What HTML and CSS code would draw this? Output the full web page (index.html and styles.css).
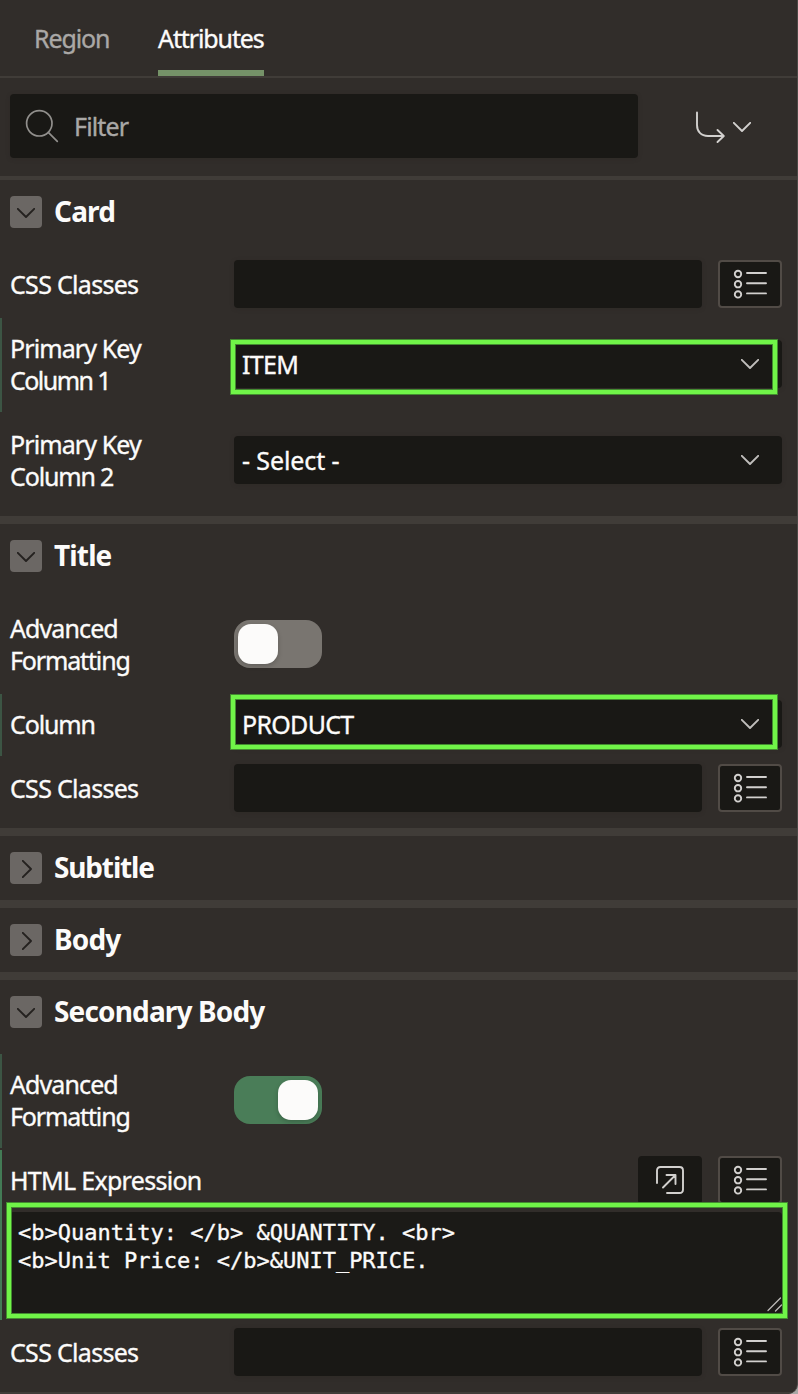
FILE: index.html
```
<!DOCTYPE html>
<html lang="en">
<head>
<meta charset="utf-8">
<title>Attributes</title>
<link rel="stylesheet" href="styles.css">
</head>
<body>
<svg class="defs" width="0" height="0">
  <defs>
    <symbol id="down" viewBox="0 0 18 10"><path d="M0.8 0.8 9 9 17.2 0.8"/></symbol>
    <symbol id="right" viewBox="0 0 10 18"><path d="M0.8 0.8 9 9 0.8 17.2"/></symbol>
    <symbol id="list" viewBox="0 0 34 30">
      <circle cx="5" cy="5" r="3.2"/><circle cx="5" cy="15.2" r="3.2"/><circle cx="5" cy="25.4" r="3.2"/>
      <path d="M14 4h19M14 14.2h19M14 24.4h19"/>
    </symbol>
  </defs>
</svg>
<main class="panel">
  <nav class="tabs">
    <a class="tab tab-region">Region</a>
    <a class="tab tab-active">Attributes</a>
  </nav>
  <div class="toolbar">
    <div class="filter">
      <svg class="search" width="34" height="34" viewBox="0 0 34 34"><circle cx="14.3" cy="14.3" r="12.7"/><path d="m23.3 23.3 9 9"/></svg>
      <span class="filter-text">Filter</span>
    </div>
    <div class="goto">
      <svg class="icon" width="30" height="32" viewBox="0 0 30 32"><path d="M1 2.500v12.500C1 21.500 5 26 12 26h15M21.500 20l6.300 6-6.300 6"/></svg>
      <svg class="icon goto-arrow" width="18" height="10"><use href="#down"/></svg>
    </div>
  </div>

  <section class="group first">
    <h2 class="head"><span class="toggle"><svg width="18" height="10"><use href="#down"/></svg></span><span class="head-text">Card</span></h2>
    <div class="rows">
      <div class="row">
        <label class="label">CSS Classes</label><div class="field"></div>
        <button class="list-btn"><svg class="icon" width="34" height="30"><use href="#list"/></svg></button>
      </div>
      <div class="row tall changed">
        <label class="label"><span class="snug">Primary Key</span><br><span class="tightest">Column 1</span></label>
        <div class="field select"><span class="value item">ITEM</span><svg class="caret" width="18" height="10"><use href="#down"/></svg><i class="mark mark-low"></i></div>
      </div>
      <div class="row tall">
        <label class="label"><span class="snug">Primary Key</span><br><span class="tight">Column 2</span></label>
        <div class="field select"><span class="value loose">- Select -</span><svg class="caret" width="18" height="10"><use href="#down"/></svg></div>
      </div>
    </div>
  </section>

  <section class="group">
    <h2 class="head"><span class="toggle"><svg width="18" height="10"><use href="#down"/></svg></span><span class="head-text">Title</span></h2>
    <div class="rows">
      <div class="row tall">
        <label class="label"><span class="snug">Advanced</span><br><span class="tight">Formatting</span></label><span class="switch"><i class="knob"></i></span>
      </div>
      <div class="row changed">
        <label class="label tight">Column</label>
        <div class="field select"><span class="value product">PRODUCT</span><svg class="caret" width="18" height="10"><use href="#down"/></svg><i class="mark"></i></div>
      </div>
      <div class="row">
        <label class="label">CSS Classes</label><div class="field"></div>
        <button class="list-btn"><svg class="icon" width="34" height="30"><use href="#list"/></svg></button>
      </div>
    </div>
  </section>

  <section class="group">
    <h2 class="head"><span class="toggle"><svg class="closed" width="10" height="18"><use href="#right"/></svg></span><span class="head-text tight">Subtitle</span></h2>
  </section>
  <section class="group">
    <h2 class="head"><span class="toggle"><svg class="closed" width="10" height="18"><use href="#right"/></svg></span><span class="head-text">Body</span></h2>
  </section>

  <section class="group">
    <h2 class="head"><span class="toggle"><svg width="18" height="10"><use href="#down"/></svg></span><span class="head-text">Secondary Body</span></h2>
    <div class="rows">
      <div class="row tall changed">
        <label class="label"><span class="snug">Advanced</span><br><span class="tight">Formatting</span></label><span class="switch on"><i class="knob"></i></span>
      </div>
      <div class="code-row changed current">
        <div class="code-head">
          <label class="label wide">HTML Expression</label>
          <button class="open-btn"><svg class="icon" width="30" height="30" viewBox="0 0 30 30"><path d="M2 18V5.500Q2 2 5.500 2h19Q28 2 28 5.500v19q0 3.500-3.500 3.500H12M8 22.500 20.500 10M11.500 10h9v9"/></svg></button>
          <button class="list-btn"><svg class="icon" width="34" height="30"><use href="#list"/></svg></button>
        </div>
        <div class="code"><pre class="code-text">&lt;b&gt;Quantity: &lt;/b&gt; &amp;QUANTITY. &lt;br&gt;
&lt;b&gt;Unit Price: &lt;/b&gt;&amp;UNIT_PRICE.</pre>
          <svg class="grip" width="15" height="15" viewBox="0 0 15 15"><path d="M1 13.500 13.500 1M8.500 14 14.500 8"/></svg>
          <i class="mark mark-code"></i>
        </div>
      </div>
      <div class="row">
        <label class="label">CSS Classes</label><div class="field"></div>
        <button class="list-btn"><svg class="icon" width="34" height="30"><use href="#list"/></svg></button>
      </div>
    </div>
  </section>
  <div class="bottom-line"></div>
</main>
</body>
</html>
```
FILE: styles.css
```
* { box-sizing: border-box; }
body { margin: 0; background: #aaa8a6; }
.defs { position: absolute; }
.panel {
  width: 798px; height: 1394px; overflow: hidden;
  background: #312d2a; border-right: 1px solid #4b4946;
  border-bottom-right-radius: 10px;
  font: 25px/32px "Noto Sans", sans-serif;
  color: #fcfbfa; letter-spacing: -0.7px;
  -webkit-text-stroke: 0.35px currentColor;
}
svg { display: block; flex: none; fill: none; stroke-width: 1.9; stroke-linecap: round; stroke-linejoin: round; overflow: visible; }
.icon { stroke: #d2d0ce; }
.tabs { display: flex; gap: 48px; height: 78px; padding-left: 34px; border-bottom: 2px solid #403c38; letter-spacing: -1.1px; }
.tab { height: 76px; padding-top: 22px; white-space: nowrap; }
.tab-region { width: 76px; color: #aaa8a6; }
.tab-active { width: 106px; border-bottom: 6px solid #759268; }
.toolbar { display: flex; align-items: center; height: 98px; padding-left: 10px; gap: 58px; padding-bottom: 2px; }
.filter { display: flex; align-items: center; gap: 15px; width: 628px; height: 64px; padding-left: 15px; background: #191815; border-radius: 4px; color: #aaa8a6; padding-bottom: 1px; box-shadow: 0 1px 4px #2925224d; }
.filter-text { padding-top: 1px; letter-spacing: -0.85px; }
.search { stroke: #918f8c; stroke-width: 1.7; }
.goto { display: flex; align-items: center; gap: 7px; }
.goto-arrow { margin-top: 2px; }
.group { border-top: 8px solid #403c38; }
.group.first { border-top-width: 4px; }
.head { display: flex; align-items: center; gap: 12px; height: 64px; margin: 0; padding-left: 10px; font-size: 28px; font-weight: 700; letter-spacing: -0.85px; -webkit-text-stroke: 0; }
.head-text { padding-bottom: 2px; }
.toggle { display: flex; align-items: center; justify-content: center; width: 32px; height: 32px; border-radius: 4px; background: #6b6764; padding: 2px 0 0; }
.toggle svg { stroke: #24211f; }
.toggle .closed { margin: -1px 0 0 2px; }
.rows { padding: 8px 0; }
.row { position: relative; display: flex; align-items: center; height: 64px; padding-right: 15px; gap: 16px; padding-left: 10px; }
.row.tall { height: 96px; }
.changed { position: relative; }
.changed::before { content: ""; position: absolute; left: 0; top: 2px; bottom: 0; width: 2px; background: #3c5544; }
.current::before { background: #437b55; }
.label { flex: none; width: 208px; white-space: nowrap; }
.snug { letter-spacing: -0.9px; }
.tight { letter-spacing: -1.15px; }
.tightest { letter-spacing: -1.55px; }
.loose { letter-spacing: -0.1px; }
.field { position: relative; flex: 1; height: 48px; border-radius: 4px; background: #191815; box-shadow: 0 1px 4px #2925224d; }
.select { display: flex; align-items: center; justify-content: space-between; padding: 0 23px 0 8px; }
.caret { stroke: #c0bebc; }
.list-btn, .open-btn { display: flex; flex: none; align-items: center; justify-content: center; width: 64px; height: 48px; margin: 0; padding: 0; border: 2px solid #514b46; border-radius: 4px; background: #191815; }
.open-btn { border-color: #191815; }
.mark { position: absolute; left: -3px; top: -5px; width: 546px; height: 54px; border: 4px solid #70f448; box-shadow: 0 0 0 1px #438b30, inset 0 0 0 1px #438b30; }
.mark-low { top: 0; }
.switch { display: flex; width: 88px; height: 48px; padding: 4px; border-radius: 16px; background: #797570; }
.on { justify-content: flex-end; background: #4a7d58; }
.knob { width: 40px; height: 40px; border-radius: 13px; background: #fcfbfa; box-shadow: 0 2px 5px #0003; }
.code-row { height: 172px; padding: 8px 15px 0 10px; }
.code-head { display: flex; align-items: center; gap: 16px; height: 48px; }
.wide { flex: 1; }
.code { position: relative; width: 772px; height: 101px; margin-top: 8px; padding: 7px 8px; background: #1b1a17; border-radius: 4px; }
.code-text { margin: 0; font: 22px/28px "DejaVu Sans Mono", monospace; letter-spacing: 0; }
.grip { position: absolute; right: 0; bottom: 1px; stroke: #bbb9b6; stroke-width: 1.3; }
.mark-code { left: -3px; top: -9px; width: 780px; height: 115px; }
.bottom-line { height: 2px; background: #403c38; }
```
